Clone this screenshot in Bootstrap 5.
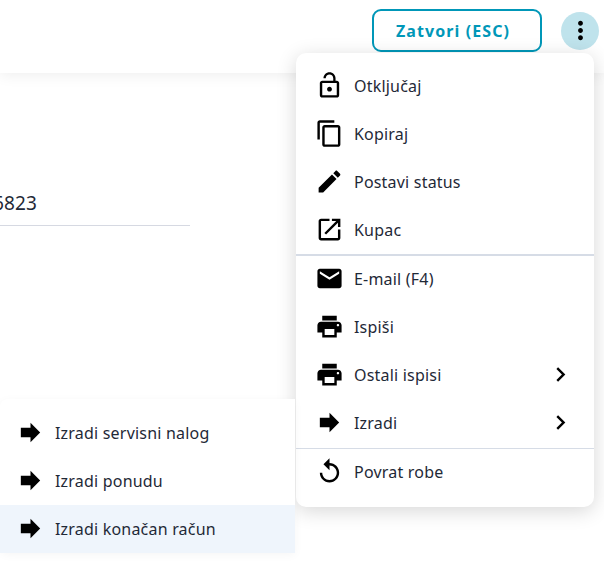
<!DOCTYPE html>
<html lang="hr"><head><meta charset="utf-8"><title>Meni</title>
<link href="https://cdn.jsdelivr.net/npm/bootstrap@5.3.0/dist/css/bootstrap.min.css" rel="stylesheet">
<style>
html,body{height:562px;overflow:hidden;background:#fff}
body{font-family:"Noto Sans",sans-serif;color:#1f2937;position:relative}
.topbar{height:73px;padding-right:5px;background:#fff;box-shadow:0 2px 14px rgba(0,0,0,.07);gap:19px}
.close-btn{width:170px;height:43px;padding:0 8px 0 0;border:2px solid #0097b8;border-radius:9px;color:#0097b8;font-weight:700;font-size:16px;letter-spacing:1.1px;background:#fff;margin-bottom:12px}
.kebab{width:38px;height:38px;padding:0;border:0;border-radius:50%;background:#bfe3ec;margin-bottom:12px}
.kebab svg{width:29px;height:29px;display:block;margin:auto}
.field{width:190px;margin-top:109px;height:44px;border-bottom:1px solid #d6d9e2;overflow:hidden;font-size:19px;line-height:42px;white-space:nowrap;letter-spacing:.1px}
.field span{display:block;margin-left:-7px}
.panel{position:absolute;background:#fff}
.main-menu{left:296px;top:53px;width:298px;height:454px;padding-top:9px;border-radius:10px;box-shadow:0 4px 20px rgba(0,0,0,.16)}
.sub-menu{left:0;top:399px;width:295px;height:154px;padding-top:10px;border-radius:8px 0 0 8px;box-shadow:0 2px 10px rgba(0,0,0,.04)}
.entry{height:48px;font-size:16px;letter-spacing:.2px;padding-bottom:1px}
.main-menu .entry{padding-left:19px;padding-right:19px}
.sub-menu .entry{padding-left:16px;padding-right:16px}
.entry svg{width:29px;height:29px;flex:none;fill:#000}
.entry .lbl{margin-left:10px;flex:1}
.entry .chev{margin-left:auto}
.entry.on{background:#eff5fc}
.sep-2{height:2px;background:#d6dce6;margin-bottom:-1px}
.sep-1{height:1px;background:#d6dce6;margin-top:1px;margin-bottom:-1px}
</style></head><body>
<svg width="0" height="0" class="d-none"><defs>
<symbol id="i-lock" viewBox="0 0 24 24"><path d="M12 17c1.1 0 2-.9 2-2s-.9-2-2-2-2 .9-2 2 .9 2 2 2zm6-9h-1V6c0-2.76-2.24-5-5-5S7 3.24 7 6h1.9c0-1.71 1.39-3.1 3.1-3.1 1.71 0 3.1 1.39 3.1 3.1v2H6c-1.1 0-2 .9-2 2v10c0 1.1.9 2 2 2h12c1.1 0 2-.9 2-2V10c0-1.1-.9-2-2-2zm0 12H6V10h12v10z"/></symbol>
<symbol id="i-copy" viewBox="0 0 24 24"><path d="M16 1H4c-1.1 0-2 .9-2 2v14h2V3h12V1zm3 4H8c-1.1 0-2 .9-2 2v14c0 1.1.9 2 2 2h11c1.1 0 2-.9 2-2V7c0-1.1-.9-2-2-2zm0 16H8V7h11v14z"/></symbol>
<symbol id="i-edit" viewBox="0 0 24 24"><path d="M3 17.25V21h3.75L17.81 9.94l-3.75-3.75L3 17.25zM20.71 7.04c.39-.39.39-1.02 0-1.41l-2.34-2.34c-.39-.39-1.02-.39-1.41 0l-1.83 1.83 3.75 3.75 1.83-1.83z"/></symbol>
<symbol id="i-open" viewBox="0 0 24 24"><path d="M19 19H5V5h7V3H5c-1.11 0-2 .9-2 2v14c0 1.1.89 2 2 2h14c1.1 0 2-.9 2-2v-7h-2v7zM14 3v2h3.59l-9.83 9.83 1.41 1.41L19 6.41V10h2V3h-7z"/></symbol>
<symbol id="i-mail" viewBox="0 0 24 24"><path d="M20 4H4c-1.1 0-1.99.9-1.99 2L2 18c0 1.1.9 2 2 2h16c1.1 0 2-.9 2-2V6c0-1.1-.9-2-2-2zm0 4l-8 5-8-5V6l8 5 8-5v2z"/></symbol>
<symbol id="i-print" viewBox="0 0 24 24"><path d="M19 8H5c-1.66 0-3 1.34-3 3v6h4v4h12v-4h4v-6c0-1.66-1.34-3-3-3zm-3 11H8v-5h8v5zm3-7c-.55 0-1-.45-1-1s.45-1 1-1 1 .45 1 1-.45 1-1 1zm-1-9H6v4h12V3z"/></symbol>
<symbol id="i-fwd" viewBox="0 0 24 24"><path d="M12 8V4l8 8-8 8v-4H4V8z"/></symbol>
<symbol id="i-replay" viewBox="0 0 24 24"><path d="M12 5V1L7 6l5 5V7c3.31 0 6 2.69 6 6s-2.69 6-6 6-6-2.69-6-6H4c0 4.42 3.58 8 8 8s8-3.58 8-8-3.58-8-8-8z"/></symbol>
<symbol id="i-chev" viewBox="0 0 24 24"><path d="M10 6L8.59 7.41 13.17 12l-4.58 4.59L10 18l6-6z"/></symbol>
</defs></svg>

<header class="topbar d-flex justify-content-end align-items-center">
  <button type="button" class="btn close-btn">Zatvori (ESC)</button>
  <button type="button" class="btn kebab" aria-label="Više"><svg viewBox="0 0 24 24"><path d="M12 8c1.1 0 2-.9 2-2s-.9-2-2-2-2 .9-2 2 .9 2 2 2zm0 2c-1.1 0-2 .9-2 2s.9 2 2 2 2-.9 2-2-.9-2-2-2zm0 6c-1.1 0-2 .9-2 2s.9 2 2 2 2-.9 2-2-.9-2-2-2z"/></svg></button>
</header>
<div class="field"><span>6823</span></div>

<nav class="panel main-menu">
  <div class="entry d-flex align-items-center"><svg><use href="#i-lock"/></svg><span class="lbl">Otključaj</span></div>
  <div class="entry d-flex align-items-center"><svg><use href="#i-copy"/></svg><span class="lbl">Kopiraj</span></div>
  <div class="entry d-flex align-items-center"><svg><use href="#i-edit"/></svg><span class="lbl">Postavi status</span></div>
  <div class="entry d-flex align-items-center"><svg><use href="#i-open"/></svg><span class="lbl">Kupac</span></div>
  <div class="sep-2"></div>
  <div class="entry d-flex align-items-center"><svg><use href="#i-mail"/></svg><span class="lbl">E-mail (F4)</span></div>
  <div class="entry d-flex align-items-center"><svg><use href="#i-print"/></svg><span class="lbl">Ispiši</span></div>
  <div class="entry d-flex align-items-center"><svg><use href="#i-print"/></svg><span class="lbl">Ostali ispisi</span><svg class="chev"><use href="#i-chev"/></svg></div>
  <div class="entry d-flex align-items-center"><svg><use href="#i-fwd"/></svg><span class="lbl">Izradi</span><svg class="chev"><use href="#i-chev"/></svg></div>
  <div class="sep-1"></div>
  <div class="entry d-flex align-items-center"><svg><use href="#i-replay"/></svg><span class="lbl">Povrat robe</span></div>
</nav>

<nav class="panel sub-menu">
  <div class="entry d-flex align-items-center"><svg><use href="#i-fwd"/></svg><span class="lbl">Izradi servisni nalog</span></div>
  <div class="entry d-flex align-items-center"><svg><use href="#i-fwd"/></svg><span class="lbl">Izradi ponudu</span></div>
  <div class="entry on d-flex align-items-center"><svg><use href="#i-fwd"/></svg><span class="lbl">Izradi konačan račun</span></div>
</nav>
</body></html>
